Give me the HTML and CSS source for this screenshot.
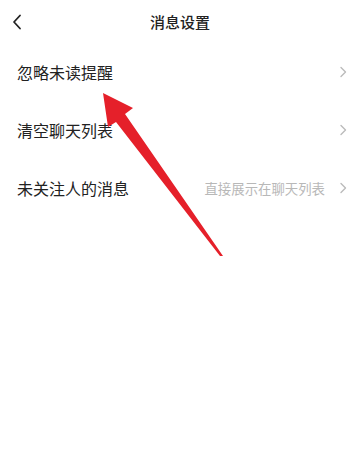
FILE: index.html
```html
<!DOCTYPE html>
<html lang="zh">
<head>
  <meta charset="UTF-8">
  <meta name="viewport" content="width=device-width, initial-scale=1.0">
  <title>消息设置</title>
  <link rel="stylesheet" href="styles.css">
</head>
<body>
  <div class="page">
    <header class="topbar">
      <span class="back">
        <svg width="10" height="16" viewBox="0 0 10 16"><path d="M8 1.5 L2 8 L8 14.5" fill="none" stroke="#222" stroke-width="1.8" stroke-linecap="round" stroke-linejoin="round"/></svg>
      </span>
      <h1>消息设置</h1>
    </header>

    <ul class="list">
      <li class="row">
        <span class="label">忽略未读提醒</span>
        <span class="chev"><svg width="8" height="12" viewBox="0 0 8 12"><path d="M2 1.5 L6.5 6 L2 10.5" fill="none" stroke="#bbb" stroke-width="1.4" stroke-linecap="round" stroke-linejoin="round"/></svg></span>
      </li>
      <li class="row">
        <span class="label">清空聊天列表</span>
        <span class="chev"><svg width="8" height="12" viewBox="0 0 8 12"><path d="M2 1.5 L6.5 6 L2 10.5" fill="none" stroke="#bbb" stroke-width="1.4" stroke-linecap="round" stroke-linejoin="round"/></svg></span>
      </li>
      <li class="row">
        <span class="label">未关注人的消息</span>
        <span class="value">直接展示在聊天列表</span>
        <span class="chev"><svg width="8" height="12" viewBox="0 0 8 12"><path d="M2 1.5 L6.5 6 L2 10.5" fill="none" stroke="#bbb" stroke-width="1.4" stroke-linecap="round" stroke-linejoin="round"/></svg></span>
      </li>
    </ul>

    <!-- red pointer drawn over the list -->
    <svg class="pointer" width="360" height="471" viewBox="0 0 360 471">
      <polygon points="103,93 133,108 125,114 223,256 220,256 116,122 108,127" fill="#e5202a"/>
    </svg>
  </div>
</body>
</html>
```

FILE: styles.css
```css
* { box-sizing: border-box; }

body {
  margin: 0;
  padding: 0;
  background: #fff;
  font-family: "Noto Sans CJK SC", "Noto Sans", sans-serif;
  color: #222;
}

.page {
  position: relative;
  width: 360px;
  height: 471px;
  overflow: hidden;
}

.topbar {
  height: 43px;
  display: flex;
  align-items: center;
  justify-content: center;
  position: relative;
}

.back {
  position: absolute;
  left: 12px;
  top: 14px;
  display: flex;
}

h1 {
  margin: 0;
  font-size: 15px;
  font-weight: 500;
  color: #222;
}

.list {
  list-style: none;
  margin: 0;
  padding: 0;
}

.row {
  height: 58px;
  display: flex;
  align-items: center;
  padding: 0 13px 0 17px;
}

.label {
  flex: 1;
  font-size: 16px;
  color: #222;
}

.value {
  font-size: 13.4px;
  color: #b8b8b8;
  margin-right: 14px;
}

.chev {
  display: flex;
}

.pointer {
  position: absolute;
  left: 0;
  top: 0;
  pointer-events: none;
}
```
